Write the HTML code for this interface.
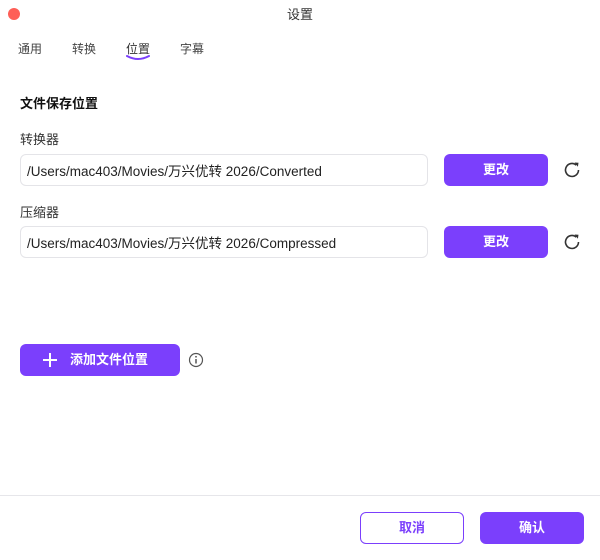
<!DOCTYPE html>
<html><head><meta charset="utf-8"><style>
*{margin:0;padding:0;box-sizing:border-box}
body{width:600px;height:560px;background:#fff;font-family:"Liberation Sans","Noto Sans CJK SC",sans-serif;color:#222;position:relative;overflow:hidden}
.a{position:absolute}
.tab{position:absolute;top:40px;font-size:12px;color:#444}
.inp{position:absolute;left:20px;width:408px;height:32px;border:1px solid #e4e4e8;border-radius:6px;font-size:13.5px;padding-left:6px;line-height:33px;color:#222}
.btn{position:absolute;background:#7b3ffc;color:#fff;border-radius:6px;font-weight:bold;font-size:13px;text-align:center}
.lbl{position:absolute;left:20px;font-size:13px;color:#333}
</style></head><body>
<div class="a" style="left:8px;top:8px;width:12px;height:12px;border-radius:50%;background:#fe5f57"></div>
<div class="a" style="left:0;width:600px;top:4px;text-align:center;font-size:13px;color:#333">设置</div>
<div class="tab" style="left:18px">通用</div>
<div class="tab" style="left:72px">转换</div>
<div class="tab" style="left:126px;color:#333">位置</div>
<svg class="a" style="left:126px;top:54px" width="24" height="8"><path d="M1 2 Q12 8 23 2" stroke="#7b3ffc" stroke-width="2" fill="none" stroke-linecap="round"/></svg>
<div class="tab" style="left:180px">字幕</div>
<div class="a" style="left:20px;top:93px;font-size:13px;font-weight:bold;color:#111">文件保存位置</div>
<div class="lbl" style="top:129px">转换器</div>
<div class="inp" style="top:154px">/Users/mac403/Movies/万兴优转 2026/Converted</div>
<div class="btn" style="left:444px;top:154px;width:104px;height:32px;line-height:32px">更改</div>
<svg class="a" style="left:561px;top:159px" width="22" height="22" viewBox="0 0 22 22"><path d="M17.5 11a6.5 6.5 0 1 1-2.2-4.9" stroke="#333" stroke-width="1.6" fill="none"/><path d="M13.5 3.5l4 0.3-0.6 4z" fill="#333"/></svg>
<div class="lbl" style="top:202px">压缩器</div>
<div class="inp" style="top:226px">/Users/mac403/Movies/万兴优转 2026/Compressed</div>
<div class="btn" style="left:444px;top:226px;width:104px;height:32px;line-height:32px">更改</div>
<svg class="a" style="left:561px;top:231px" width="22" height="22" viewBox="0 0 22 22"><path d="M17.5 11a6.5 6.5 0 1 1-2.2-4.9" stroke="#333" stroke-width="1.6" fill="none"/><path d="M13.5 3.5l4 0.3-0.6 4z" fill="#333"/></svg>
<div class="btn" style="left:20px;top:344px;width:160px;height:32px;line-height:32px;padding-left:18px">添加文件位置</div>
<svg class="a" style="left:42px;top:352px" width="16" height="16"><path d="M8 1v14M1 8h14" stroke="#fff" stroke-width="2"/></svg>
<svg class="a" style="left:188px;top:352px" width="16" height="16"><circle cx="8" cy="8" r="6.5" stroke="#555" stroke-width="1.2" fill="none"/><path d="M8 7v4.5" stroke="#555" stroke-width="1.5"/><circle cx="8" cy="4.8" r="0.9" fill="#555"/></svg>
<div class="a" style="left:0;top:495px;width:600px;height:1px;background:#e6e6ea"></div>
<div class="a" style="left:360px;top:512px;width:104px;height:32px;border:1px solid #7b3ffc;border-radius:6px;text-align:center;line-height:30px;color:#7b3ffc;font-weight:bold;font-size:13px">取消</div>
<div class="btn" style="left:480px;top:512px;width:104px;height:32px;line-height:32px">确认</div>
</body></html>
